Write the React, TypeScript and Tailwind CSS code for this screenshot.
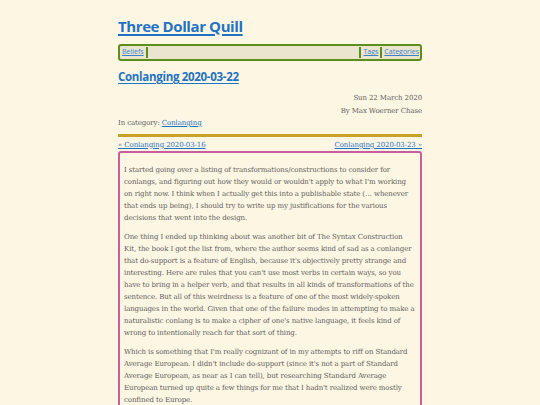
export default function App() {
  const sans = { fontFamily: '"Open Sans", "Noto Sans", sans-serif' };
  return (
    <div className="min-h-screen bg-[#fdf6e3] text-[#5e5e5e]">
      <div className="w-[304px] mx-auto pt-[13px]">
        <h1 className="text-[15px] leading-[26px] font-bold tracking-[-0.4px]" style={sans}>
          <a href="#" className="text-[#1f73c4] underline decoration-[1.5px] underline-offset-2">Three Dollar Quill</a>
        </h1>
        <nav className="mt-[5px] h-[17px] flex items-center border-2 border-[#5d8e1c] rounded-[3px] bg-[#ebe5d0] px-[1px] text-[7px]" style={sans}>
          <a href="#" className="text-[#3b82c8] underline px-[1px]">Beliefs</a>
          <span className="w-[2px] h-[11px] bg-[#5d8e1c] ml-[1px]" />
          <div className="flex-1" />
          <span className="w-[2px] h-[11px] bg-[#5d8e1c] mr-[2px]" />
          <a href="#" className="text-[#3b82c8] underline">Tags</a>
          <span className="w-[2px] h-[11px] bg-[#5d8e1c] mx-[2px]" />
          <a href="#" className="text-[#3b82c8] underline">Categories</a>
        </nav>
        <h2 className="mt-[6px] text-[11.5px] leading-[19px] font-bold tracking-[-0.3px]" style={sans}>
          <a href="#" className="text-[#1f73c4] underline underline-offset-2">Conlanging 2020-03-22</a>
        </h2>
        <div className="text-[7px] leading-[12.5px] tracking-[-0.1px]" style={{ fontFamily: '"DejaVu Serif", serif' }}>
          <div className="mt-[6px] text-right">Sun 22 March 2020</div>
          <div className="text-right">By Max Woerner Chase</div>
          <div>
            In category: <a href="#" className="text-[#1f73c4] underline">Conlanging</a>
          </div>
          <div className="mt-[4px] h-[3px] bg-[#c7a227]" />
          <div className="mt-[2px] flex justify-between">
            <a href="#" className="text-[#1f73c4] underline">« Conlanging 2020-03-16</a>
            <a href="#" className="text-[#1f73c4] underline">Conlanging 2020-03-23 »</a>
          </div>
          <div className="border-2 border-[#c65f9c] rounded-[3px] px-[4px] pt-[5px] pb-[6px] leading-[12px]">
            <p className="mt-[6px]">
              I started going over a listing of transformations/constructions to consider for conlangs, and figuring out how they would or wouldn't apply to what I'm working on right now. I think when I actually get this into a publishable state (… whenever that ends up being), I should try to write up my justifications for the various decisions that went into the design.
            </p>
            <p className="mt-[7px]">
              One thing I ended up thinking about was another bit of The Syntax Construction Kit, the book I got the list from, where the author seems kind of sad as a conlanger that do-support is a feature of English, because it's objectively pretty strange and interesting. Here are rules that you can't use most verbs in certain ways, so you have to bring in a helper verb, and that results in all kinds of transformations of the sentence. But all of this weirdness is a feature of one of the most widely-spoken languages in the world. Given that one of the failure modes in attempting to make a naturalistic conlang is to make a cipher of one's native language, it feels kind of wrong to intentionally reach for that sort of thing.
            </p>
            <p className="mt-[7px]">
              Which is something that I'm really cognizant of in my attempts to riff on Standard Average European. I didn't include do-support (since it's not a part of Standard Average European, as near as I can tell), but researching Standard Average European turned up quite a few things for me that I hadn't realized were mostly confined to Europe.
            </p>
          </div>
        </div>
      </div>
    </div>
  );
}
